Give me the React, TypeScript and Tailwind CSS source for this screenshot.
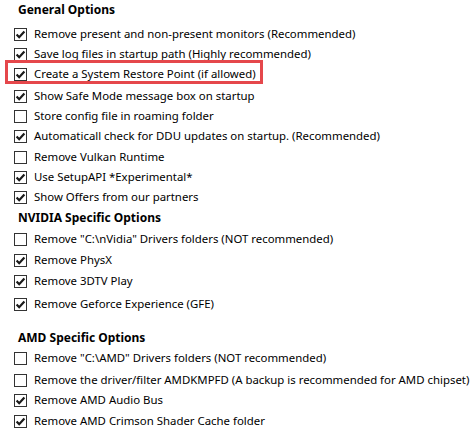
type Row = {
  kind: "head" | "check";
  label: string;
  checked?: boolean;
  mt: string;
  marked?: boolean;
};

const rows: Row[] = [
  { kind: "head", label: "General Options", mt: "mt-0" },
  { kind: "check", label: "Remove present and non-present monitors (Recommended)", checked: true, mt: "mt-[4px]" },
  { kind: "check", label: "Save log files in startup path (Highly recommended)", checked: true, mt: "mt-0" },
  { kind: "check", label: "Create a System Restore Point (if allowed)", checked: true, mt: "mt-0", marked: true },
  { kind: "check", label: "Show Safe Mode message box on startup", checked: true, mt: "mt-[2px]" },
  { kind: "check", label: "Store config file in roaming folder", checked: false, mt: "mt-0" },
  { kind: "check", label: "Automaticall check for DDU updates on startup. (Recommended)", checked: true, mt: "mt-0" },
  { kind: "check", label: "Remove Vulkan Runtime", checked: false, mt: "mt-[1px]" },
  { kind: "check", label: "Use SetupAPI *Experimental*", checked: true, mt: "mt-0" },
  { kind: "check", label: "Show Offers from our partners", checked: true, mt: "mt-0" },
  { kind: "head", label: "NVIDIA Specific Options", mt: "mt-[1px]" },
  { kind: "check", label: 'Remove "C:\\nVidia" Drivers folders (NOT recommended)', checked: false, mt: "mt-[1px]" },
  { kind: "check", label: "Remove PhysX", checked: true, mt: "mt-[1px]" },
  { kind: "check", label: "Remove 3DTV Play", checked: true, mt: "mt-[1px]" },
  { kind: "check", label: "Remove Geforce Experience (GFE)", checked: true, mt: "mt-[3px]" },
  { kind: "head", label: "AMD Specific Options", mt: "mt-[14px]" },
  { kind: "check", label: 'Remove "C:\\AMD" Drivers folders (NOT recommended)', checked: false, mt: "mt-0" },
  { kind: "check", label: "Remove the driver/filter AMDKMPFD (A backup is recommended for AMD chipset)", checked: false, mt: "mt-[2px]" },
  { kind: "check", label: "Remove AMD Audio Bus", checked: true, mt: "mt-0" },
  { kind: "check", label: "Remove AMD Crimson Shader Cache folder", checked: true, mt: "mt-[1px]" },
];

const Box = ({ checked }: { checked?: boolean }) => (
  <span className="flex h-[13px] w-[13px] shrink-0 items-center justify-center border border-[#333333] bg-white">
    {checked && (
      <svg width="11" height="11" viewBox="0 0 11 11" aria-hidden="true">
        <path d="M1.6 5.4 L4.2 8.2 L9.4 2.4" fill="none" stroke="#1a1a1a" strokeWidth="2.2" />
      </svg>
    )}
  </span>
);

export default function App() {
  return (
    <div className="h-[433px] w-[472px] overflow-hidden bg-white font-['Noto_Sans',sans-serif] text-[11.4px] text-black">
      <div className="flex flex-col">
        {rows.map((r, i) =>
          r.kind === "head" ? (
            <div key={i} className={`flex h-[20px] items-center pl-[18px] text-[12px] font-bold ${r.mt}`}>
              {r.label}
            </div>
          ) : (
            <div key={i} className={`relative flex h-[20px] items-center gap-[7px] pl-[14px] ${r.mt}`}>
              {r.marked && (
                <span className="pointer-events-none absolute left-[5px] top-[-4px] h-[24px] w-[258px] border-[3px] border-[#e5474b]" />
              )}
              <Box checked={r.checked} />
              <span className="whitespace-nowrap leading-none">{r.label}</span>
            </div>
          )
        )}
      </div>
    </div>
  );
}
